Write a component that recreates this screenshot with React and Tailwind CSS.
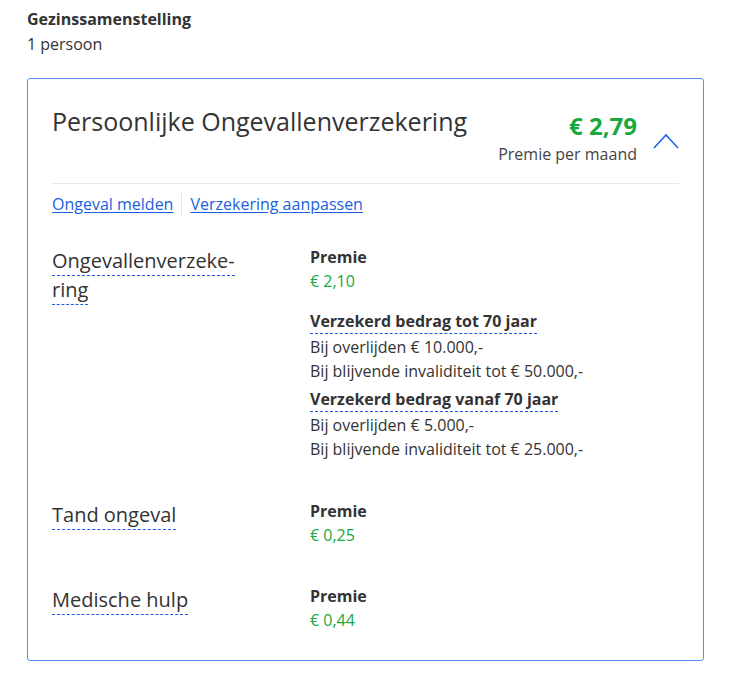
import React from 'react'

const rows = [
  {
    label: ['Ongevallenverzeke-', 'ring'],
    premie: '€ 2,10',
    details: [
      {
        title: 'Verzekerd bedrag tot 70 jaar',
        lines: ['Bij overlijden € 10.000,-', 'Bij blijvende invaliditeit tot € 50.000,-']
      },
      {
        title: 'Verzekerd bedrag vanaf 70 jaar',
        lines: ['Bij overlijden € 5.000,-', 'Bij blijvende invaliditeit tot € 25.000,-']
      }
    ]
  },
  { label: ['Tand ongeval'], premie: '€ 0,25' },
  { label: ['Medische hulp'], premie: '€ 0,44' }
]

function Dotted({ children }) {
  return <span className="border-b border-dashed border-[#1a5ce8] pb-[1px]">{children}</span>
}

export default function App() {
  return (
    <div className="min-h-[675px] bg-white px-[27px] pt-[7px] text-[#333] font-['Open_Sans',sans-serif]">
      {/* Gezin */}
      <div className="text-[16px] font-bold leading-[24px]">Gezinssamenstelling</div>
      <div className="mt-[1px] text-[16px] leading-[24px]">1 persoon</div>

      {/* Card */}
      <div className="mt-[22px] w-[677px] rounded-[3px] border border-[#5a8fee] px-[24px] pb-[28px]">
        {/* Header */}
        <div className="flex items-start justify-between border-b border-[#e3e9f1] pt-[25px] pb-[17px]">
          <h2 className="text-[25px] leading-[34px] font-normal">Persoonlijke Ongevallenverzekering</h2>
          <div className="flex items-start">
            <div className="mt-[6px] flex flex-col items-end">
              <div className="text-[24px] font-bold leading-[32px] text-[#19a83c]">€ 2,79</div>
              <div className="text-[16px] leading-[24px] text-[#444]">Premie per maand</div>
            </div>
            <svg className="ml-[16px] mt-[29px]" width="26" height="16" viewBox="0 0 26 16" fill="none">
              <path d="M1 15 L13 2 L25 15" stroke="#1f66e5" strokeWidth="1.6" />
            </svg>
          </div>
        </div>

        {/* Links */}
        <div className="mt-[8px] flex items-center text-[16px] leading-[24px] text-[#1a5fdc]">
          <a href="#" className="underline underline-offset-2">Ongeval melden</a>
          <span className="mx-[8px] h-[22px] w-px bg-[#dfe6ee]" />
          <a href="#" className="underline underline-offset-2">Verzekering aanpassen</a>
        </div>

        {/* Rows */}
        <div className="mt-[29px] flex flex-col gap-[37px]">
          {rows.map((row, i) => (
            <div key={i} className="flex">
              <div className="w-[258px] shrink-0 pt-[1px] text-[20px] leading-[29px]">
                {row.label.map((l, j) => (
                  <div key={j}>
                    <Dotted>{l}</Dotted>
                  </div>
                ))}
              </div>
              <div className="text-[16px] leading-[24px]">
                <div className="font-bold">Premie</div>
                <div className="text-[#19a83c]">{row.premie}</div>
                {row.details && (
                  <div className="mt-[16px] mb-[1px] flex flex-col gap-[4px]">
                    {row.details.map((d, k) => (
                      <div key={k}>
                        <div className="h-[26px] font-bold">
                          <Dotted>{d.title}</Dotted>
                        </div>
                        {d.lines.map((line, m) => (
                          <div key={m}>{line}</div>
                        ))}
                      </div>
                    ))}
                  </div>
                )}
              </div>
            </div>
          ))}
        </div>
      </div>
    </div>
  )
}
